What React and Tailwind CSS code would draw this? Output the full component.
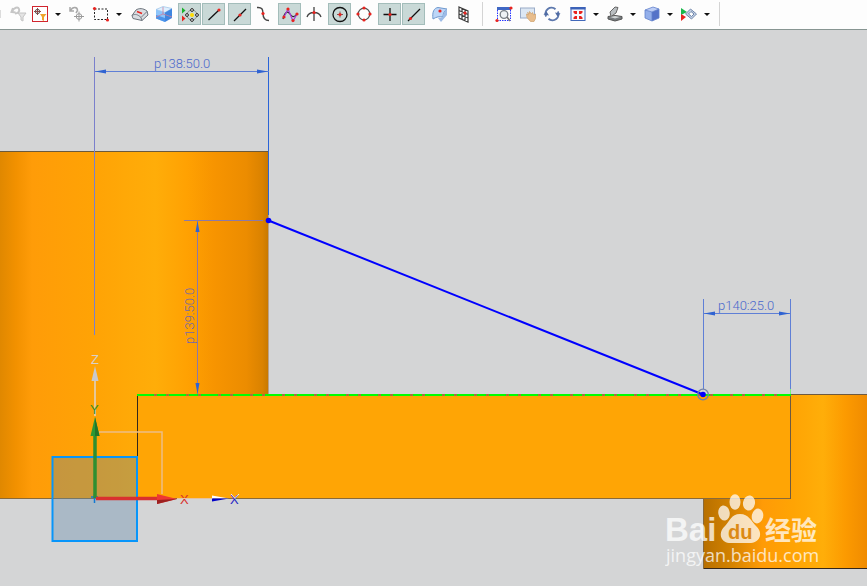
import React from "react";

const RED = "#e8231f";

function Icon({ children, size = "w-[18px] h-[18px]" }) {
  return (
    <svg viewBox="0 0 18 18" className={`${size} shrink-0`} fill="none" aria-hidden="true">
      {children}
    </svg>
  );
}

function Tool({ label, on, narrow, children }) {
  return (
    <button
      type="button"
      aria-label={label}
      aria-pressed={on ? true : undefined}
      className={`flex h-[22px] shrink-0 items-center justify-center ${narrow ? "w-5" : "w-[23px]"} ${
        on ? "border border-[#a3bdba] bg-[#c9d9d7]" : ""
      }`}
    >
      <Icon>{children}</Icon>
    </button>
  );
}

function Caret({ label }) {
  return (
    <button type="button" aria-label={label} className="flex h-[22px] w-4 shrink-0 items-center justify-center">
      <svg viewBox="0 0 6 3" className="h-[3px] w-[6px]" aria-hidden="true">
        <path d="M0 0h6L3 3z" fill="#111" />
      </svg>
    </button>
  );
}

function Pair({ children }) {
  return <div className="flex shrink-0 gap-px">{children}</div>;
}

function Separator() {
  return <div className="h-6 w-px shrink-0 bg-[#d4d4d4]" />;
}

const Dot = ({ x, y, r = 1.6 }) => <circle cx={x} cy={y} r={r} fill={RED} />;

function Toolbar() {
  return (
    <div
      role="toolbar"
      aria-label="Selection bar"
      className="flex h-[30px] items-center overflow-hidden border-b border-[#879592] bg-[#fdfdfd] pb-px"
    >
      <div className="flex shrink-0 gap-px">
        <div className="flex h-[22px] w-2 items-center">
          <div className="h-2 w-px bg-[#dcdcdc]" />
        </div>
        <Tool label="Reset filter" narrow>
          <path d="M3 3 1.500 7l4 .5M2 6.500c2-4 6-5 7-2.500s-1 4.500-4 4.500" stroke="#c6c6c6" strokeWidth="2" />
          <path d="M8 8h8l-3 4v4l-2-1v-3z" fill="#e4e4e4" stroke="#c4c4c4" />
        </Tool>
        <div className="flex">
          <Tool label="Selection filter" narrow>
            <rect x="1.500" y="1.500" width="15" height="15" fill="#fff" stroke="#d1242e" />
            <circle cx="6.500" cy="6.500" r="2.200" stroke="#555" />
            <path d="M6.500 3v7M3 6.500h7" stroke="#8a4a4a" />
            <path d="M9 9h6.500L13 12v4l-2-1v-3z" fill="#f0a52c" />
          </Tool>
          <Caret label="Selection filter options" />
        </div>
        <Tool label="Rotate selection" narrow>
          <path d="M2 2v4h4M2.500 5.500C5 1 9.500 2 9.500 5.500L8 8" stroke="#a8a8a8" strokeWidth="1.500" />
          <circle cx="11" cy="11.500" r="2.800" stroke="#9b9b9b" />
          <path d="M11 6.500v10M6 11.500h10" stroke="#9b9b9b" />
        </Tool>
        <div className="ml-[3px] flex">
          <Tool label="Rectangle select" narrow>
            <rect x="2.500" y="4" width="13" height="10.500" stroke="#222" strokeDasharray="2 1.500" />
            <Dot x={2.500} y={3.500} />
            <Dot x={15.500} y={15} />
          </Tool>
          <Caret label="Rectangle select options" />
        </div>
      </div>

      <div className="ml-px flex shrink-0 gap-[3px]">
        <Pair>
          <Tool label="Allow hidden selection">
            <path d="M1 10.500 5 5c3-2 7-2 11 1l1 4-6 5.500-9-2z" fill="#d9dde2" stroke="#6d747c" />
            <path d="M1 10.500c3-2 6-1 9 2l1 3M10 12.500l6-6" stroke="#767d85" />
            <path d="m6 6.500 5 2" stroke={RED} strokeWidth="1.500" />
          </Tool>
          <Tool label="Highlight faces">
            <path d="m1 4.500 7-3 9 2-7 4z" fill="#dff0ff" stroke="#9bc1e6" strokeWidth=".7" />
            <path d="m1 4.500 9 3V17l-9-3.500z" fill="#8cc4fa" />
            <path d="m10 7.500 7-4V13l-7 4z" fill="#3f86e0" />
            <path d="M1 10v3.500L10 17v-4z" fill="#4b93ea" />
            <path d="M8 2v7l9 3M1 12l7-3" stroke="#c87d9c" strokeWidth=".8" />
          </Tool>
        </Pair>
        <Pair>
          <Tool label="Enable snap point" on>
            <path d="m1 2.500 3.500 3L1 8.500z" fill="#19b22b" />
            <path d="m1 10.500 3.500 3-3.500 3z" fill={RED} />
            <circle cx="11" cy="10" r="5" stroke="#8a8f8d" />
            <circle cx="11" cy="10" r="2" fill="#ffdc00" />
            <g fill="#fff" stroke="#222">
              <circle cx="11" cy="5" r="1.400" />
              <circle cx="11" cy="15" r="1.400" />
              <circle cx="6" cy="10" r="1.400" />
              <circle cx="16" cy="10" r="1.400" />
            </g>
          </Tool>
          <Tool label="End point" on>
            <path d="M3.500 15 14 5" stroke="#111" strokeWidth="1.300" />
            <Dot x={14} y={5} />
          </Tool>
        </Pair>
        <Pair>
          <Tool label="Mid point" on>
            <path d="M3 16 15 4" stroke="#111" strokeWidth="1.300" />
            <Dot x={9} y={10} />
          </Tool>
          <Tool label="Control point">
            <path d="M2 2.500c5-.5 6 2 6 6s1 7 6 7" stroke="#444" strokeWidth="1.400" />
            <Dot x={8} y={8.500} />
          </Tool>
        </Pair>
        <Pair>
          <Tool label="Pole point" on>
            <path d="M2 14C4 6 7 6 9 9s4 4 7 0" stroke="#222" strokeWidth="1.200" />
            <path d="m3 12 4-8 5 12 4-7" stroke="#a83fd8" strokeWidth="1.300" />
            <Dot x={3} y={12} />
            <Dot x={7} y={4} />
            <Dot x={12} y={15.500} />
            <Dot x={16} y={9} />
          </Tool>
          <Tool label="Intersection point">
            <path d="M9 2v14M2 12c2-6 12-6 14 0" stroke="#444" strokeWidth="1.300" />
            <Dot x={9} y={7.500} />
          </Tool>
        </Pair>
        <Pair>
          <Tool label="Arc center" on>
            <circle cx="9" cy="9.500" r="7" stroke="#111" strokeWidth="1.300" />
            <path d="M6 9.500h6M9 6.500v6" stroke="#7b5555" />
            <Dot x={9} y={9.500} />
          </Tool>
          <Tool label="Quadrant point">
            <circle cx="9" cy="9" r="5.800" stroke="#555" strokeWidth="1.300" />
            <Dot x={9} y={3} />
            <Dot x={9} y={15} />
            <Dot x={3} y={9} />
            <Dot x={15} y={9} />
          </Tool>
        </Pair>
        <Pair>
          <Tool label="Existing point" on>
            <path d="M9 3v13M2.500 9.500h13" stroke="#111" strokeWidth="1.300" />
            <Dot x={9} y={9.500} />
          </Tool>
          <Tool label="Point on curve" on>
            <path d="M3 16 15 4" stroke="#111" strokeWidth="1.300" />
            <Dot x={5.500} y={13.500} />
          </Tool>
        </Pair>
        <Pair>
          <Tool label="Point on face">
            <path d="M2 14C1 7 3 3 7 2.500l9 1.500c-3 2-4 5-4 8-3-1-7 0-10 2z" fill="#bcd6f7" stroke="#6f98cd" />
            <path d="M16 4v6l-6 7-3-4 5-1c0-3 1-6 4-8z" fill="#9dbbe6" />
            <Dot x={9} y={6} />
          </Tool>
          <Tool label="Bounded grid point">
            <path d="m4 2 9 4v11l-9-4zM7 3.500v11M10 5v11M4 5.500l9 4M4 9l9 4" stroke="#3c3c3c" strokeWidth="1.200" />
            <Dot x={10} y={8} />
          </Tool>
        </Pair>
      </div>

      <div className="ml-[7px] flex shrink-0 items-center">
        <Separator />
        <div className="ml-[9px] flex gap-px">
          <Tool label="Zoom">
            <path d="M2 2h14v3H2z" fill="#3f67c4" />
            <path d="M2.500 5v10.500h13V5" stroke="#2635ff" strokeDasharray="1.500 1" />
            <circle cx="9" cy="9.500" r="3.800" fill="#eef2f4" stroke="#798086" strokeWidth="1.300" />
            <path d="m12 12 3 4" stroke="#777" strokeWidth="1.600" />
            <Dot x={2} y={15.500} />
            <Dot x={16} y={3} />
          </Tool>
          <Tool label="Pan">
            <rect x="1.500" y="3" width="14" height="10" fill="#dce7f3" stroke="#9aacc8" />
            <path d="m7.500 9 2 1-1-2.500 2 1V6.500l2 2.500 1-1.500 1 2.500 2-1v4.500L15 16.500h-3.500L8 12.500z" fill="#e8bd8c" stroke="#cfa06c" strokeWidth=".7" />
          </Tool>
          <Tool label="Rotate">
            <path d="M3.200 11.500A6 6 0 0 1 12.500 4.200M14.800 6.500a6 6 0 0 1-9.300 7.300" stroke="#5d78ad" strokeWidth="1.900" />
            <path d="m.5 9.500 3-3L6 10.500zM17.500 8.500l-3 3-2.500-4z" fill="#4f6ba3" />
          </Tool>
        </div>
        <div className="ml-[5px] flex gap-px">
          <div className="flex">
            <Tool label="Fit" narrow>
              <rect x="2" y="2.500" width="14" height="13" fill="#f5f9ff" stroke="#4269ba" />
              <path d="M1.500 2h15v2.500h-15z" fill="#3c62b8" />
              <path d="M4.500 6H8v3H6L4.500 7.500zM13.500 6H10v3h2l1.500-1.500zM4.500 14H8v-3H6l-1.500 1.500zM13.500 14H10v-3h2l1.500 1.500z" fill={RED} />
            </Tool>
            <Caret label="Fit options" />
          </div>
          <div className="flex">
            <Tool label="Shaded with edges" narrow>
              <path d="m2 11.500 7-1 7 1v2.500l-7 2-7-2z" fill="#777c7f" stroke="#555" />
              <path d="m4 7 5-5 3 0.500L10 8l-5 3.500z" fill="#b9bec1" stroke="#666" />
              <path d="m4 12 5-1 5 1-5 1.500z" fill="#d1d5d6" />
            </Tool>
            <Caret label="Rendering style options" />
          </div>
          <div className="flex">
            <Tool label="Orient view" narrow>
              <path d="m2 5 8-3 6 2-7 3z" fill="#bccdf5" />
              <path d="m2 5 7 2v9l-7-3z" fill="#93afea" />
              <path d="m9 7 7-3v9l-7 3z" fill="#5573c8" />
              <path d="m2 5 8-3 6 2v9l-7 3-7-3zM2 5l7 2 7-3M9 7v9" stroke="#6180cb" strokeWidth=".8" />
            </Tool>
            <Caret label="Orient view options" />
          </div>
          <div className="flex">
            <Tool label="Show and hide" narrow>
              <path d="m1 3 6 4-6 3z" fill="#19b84b" />
              <path d="m1 9 5 3-5 4z" fill={RED} />
              <path d="m5.500 9 5-5 6 5-5 5z" fill="#c3d0e4" stroke="#7389ad" />
              <path d="m8.500 9 2.500-2.500L14 9l-2.500 2.500z" fill="#fff" stroke="#6d85aa" />
            </Tool>
            <Caret label="Show and hide options" />
          </div>
        </div>
        <div className="ml-1">
          <Separator />
        </div>
      </div>
    </div>
  );
}

const dimText = "fill-[#4a68cc] font-['Roboto','Liberation_Sans',sans-serif] text-[13px] font-light";
const axisText = "font-['Liberation_Sans',sans-serif] text-[13px]";

function Viewport() {
  return (
    <svg viewBox="0 30 867 556" className="block h-auto w-full" role="img" aria-label="Sketch view">
      <defs>
        <linearGradient id="bossLeft" gradientUnits="userSpaceOnUse" x1="0" y1="0" x2="268" y2="0">
          <stop offset="0" stopColor="#e08800" />
          <stop offset=".06" stopColor="#f29100" />
          <stop offset=".12" stopColor="#ff9c08" />
          <stop offset=".35" stopColor="#ffa305" />
          <stop offset=".58" stopColor="#ffad09" />
          <stop offset=".7" stopColor="#ffa102" />
          <stop offset=".8" stopColor="#f79400" />
          <stop offset=".92" stopColor="#ec8c00" />
          <stop offset=".98" stopColor="#da8200" />
          <stop offset="1" stopColor="#c87900" />
        </linearGradient>
        <linearGradient id="bossRight" gradientUnits="userSpaceOnUse" x1="704" y1="0" x2="867" y2="0">
          <stop offset="0" stopColor="#b87000" />
          <stop offset=".15" stopColor="#d08000" />
          <stop offset=".36" stopColor="#ff9b06" />
          <stop offset=".55" stopColor="#ffa404" />
          <stop offset=".73" stopColor="#ffae09" />
          <stop offset=".87" stopColor="#fc9a00" />
          <stop offset="1" stopColor="#f08b00" />
        </linearGradient>
      </defs>

      <g shapeRendering="crispEdges">
        <rect x="0" y="152" width="268" height="347" fill="url(#bossLeft)" />
        <path d="M0 151.500h268" stroke="#6b5a3c" />
        <path d="M268.500 215v180" stroke="#b9a18b" />
        <rect x="704" y="395" width="163" height="174" fill="url(#bossRight)" />
        <rect x="137" y="395" width="653" height="104" fill="#ffa505" />
        <path d="M790 394.500h77M790.500 395v104" stroke="#6e5a40" />
        <path d="M0 498.500h790" stroke="#8a6a3a" />
        <path d="M137.500 395v62M704 568.500h163" stroke="#33271c" />
        <path d="M703.500 499v70" stroke="#8a6a3a" />
        <path d="M137 394.500h654" stroke="#a9713f" strokeWidth="2" />
        <path d="M137 394.500h654" stroke="#00ff00" strokeWidth="2" strokeDasharray="17 3 9 3" />
        <path d="M790.500 389v5" stroke="#7cf07c" />
      </g>

      <g stroke="#5f7fd6" shapeRendering="crispEdges">
        <path d="M94.500 57v278" stroke="#7a80cc" />
        <path d="M268.500 57v158" stroke="#2a64d8" />
        <path d="M95 71.500h174" />
        <path d="M184 220.500h79M197.500 221v173" stroke="#8b79a8" />
        <path d="M703.500 299v90M790.500 299v90M703 313.500h88" />
      </g>
      <path
        d="m95 71.500 11-2v4zM268 71.500l-11-2v4zM704 313.500l11-2v4zM790 313.500l-11-2v4zM197.500 221l-2 11h4zM197.500 394l-2-11h4z"
        fill="#2f63d2"
      />
      <text x="154" y="68" className={dimText}>p138:50.0</text>
      <text x="718" y="310" className={dimText}>p140:25.0</text>
      <text
        transform="translate(194 344) rotate(-90)"
        className="fill-[#7568a8] font-['Roboto','Liberation_Sans',sans-serif] text-[13px] font-light"
      >
        p139:50.0
      </text>

      <path d="M268.500 220.500 703 394.500" stroke="#0000ff" strokeWidth="2" />
      <circle cx="268.500" cy="220.500" r="2.800" fill="#0000ff" />
      <circle cx="703" cy="394.500" r="5.300" fill="none" stroke="#7180a8" strokeWidth="1.300" />
      <circle cx="703" cy="394.500" r="2.800" fill="#0000ff" />

      <path d="M99 432h63v62" fill="none" stroke="#edbd86" strokeWidth="1.500" />
      <rect x="52.500" y="457" width="84.500" height="84" fill="#5c86a8" fillOpacity=".35" stroke="#0795fa" strokeWidth="2" />
      <path d="M53 498.500h84" stroke="#75776a" />

      <path d="M95 380v36" stroke="#ddd3cb" strokeWidth="1.500" />
      <path d="m95 366 3.500 15h-7z" fill="#c9c9cb" />
      <text x="91" y="364" className={`${axisText} fill-[#d8d0c8]`}>Z</text>
      <path d="M91 497h7M94.500 494v9" stroke="#1379d2" strokeWidth="1.500" />
      <path d="M95 498V434" stroke="#2e8f31" strokeWidth="3.500" />
      <path d="m95 417 4.500 19h-9z" fill="#2f9733" />
      <path d="m95 417 4.500 19H95z" fill="#23752b" />
      <text x="90" y="414" className={`${axisText} fill-[#398f24]`}>Y</text>
      <path d="M96 498.500h62" stroke="#d9302f" strokeWidth="3.500" />
      <path d="m177 499-20-5v10z" fill="#ee3832" />
      <path d="m177 499-20 1v4z" fill="#9c2020" />
      <text x="180" y="504" className={`${axisText} fill-[#d92f2a]`}>X</text>
      <path d="M177 498.500h36" stroke="#e5c1a0" />
      <path d="m229 498.500-17-3v3z" fill="#fff" />
      <path d="M229 498.500h-17v3z" fill="#0000c8" />
      <text x="230" y="504" className={`${axisText} fill-[#2424c4]`}>X</text>
      <path d="m231 494 4 4.500 4-4.500" stroke="#eeeeff" fill="none" />

      <g fill="#ffffff" opacity=".74">
        <text x="665" y="541" className="font-['Liberation_Sans',sans-serif] text-[33px] font-bold">Bai</text>
        <ellipse cx="724" cy="513" rx="5.700" ry="7.500" transform="rotate(-10 724 513)" />
        <ellipse cx="735" cy="502" rx="5.500" ry="7.800" />
        <ellipse cx="749" cy="503" rx="6" ry="7.500" transform="rotate(10 749 503)" />
        <ellipse cx="757.500" cy="516" rx="5.700" ry="7.500" transform="rotate(12 757.500 516)" />
        <path d="M740 514c-9 0-10 7-15 12-7 6-5 16 4 17h22c10-1 12-11 5-17-5-5-7-12-16-12z" />
        <text x="765" y="540" className="font-['Noto_Sans_CJK_SC',sans-serif] text-[26px] font-bold">经验</text>
        <text x="666" y="562" className="font-['Open_Sans',sans-serif] text-[18px]">jingyan.baidu.com</text>
      </g>
      <text x="728" y="539" className="fill-[#dc8a14] font-['Liberation_Sans',sans-serif] text-[20px] font-bold">du</text>
    </svg>
  );
}

export default function App() {
  return (
    <main className="min-h-screen bg-[#d4d5d6]">
      <Toolbar />
      <Viewport />
    </main>
  );
}
